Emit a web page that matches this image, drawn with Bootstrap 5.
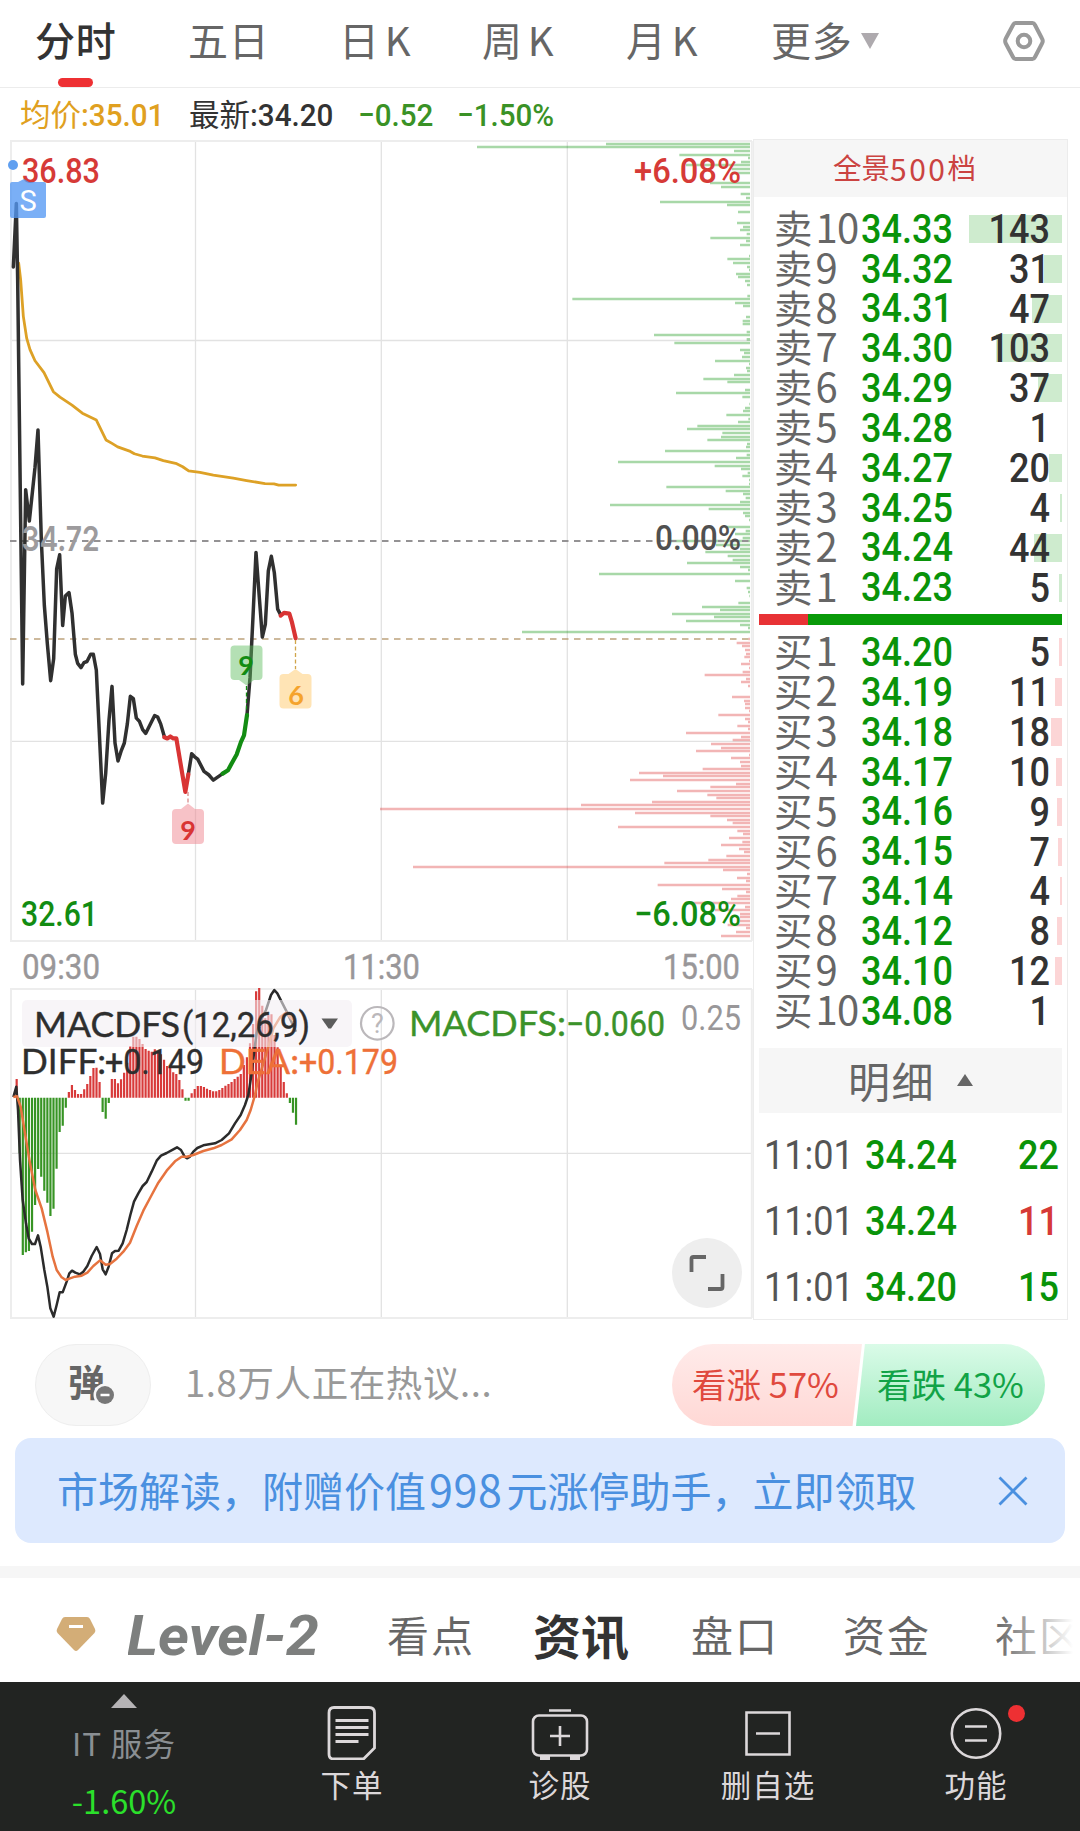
<!DOCTYPE html>
<html lang="zh-CN">
<head>
<meta charset="utf-8">
<meta name="viewport" content="width=device-width, initial-scale=1">
<title>分时</title>
<link href="https://cdn.jsdelivr.net/npm/bootstrap@5.3.0/dist/css/bootstrap.min.css" rel="stylesheet">
<style>
  body{width:1080px;height:1831px;overflow:hidden;background:#fff;color:#333;font-family:"Noto Sans CJK SC",sans-serif;line-height:1}
  svg{display:block;flex:none}
  svg text{white-space:pre}
  .num{display:inline-block;font-family:Roboto,"Noto Sans CJK SC",sans-serif;font-weight:500;transform:scaleX(.9);transform-origin:0 50%}
  .c-gold{color:#e0a020}.c-green{color:#3a9226}.c-deep{color:#099309}.c-red{color:#d63a37}.c-grey{color:#666}

  .period-bar{height:88px;border-bottom:1px solid #ececec;padding-left:35px;font-size:40px;color:#666}
  .period-bar .tab-item{flex:none;height:88px;line-height:78px;white-space:nowrap;letter-spacing:.8px}
  .period-bar .tab-item i{font-style:normal;margin-left:5px}
  .tab-item.on{color:#333;font-weight:500;position:relative}
  .tab-item.on::after{content:"";position:absolute;left:23px;bottom:1px;width:35px;height:9px;border-radius:5px;background:#ee3033}
  .w-a{width:153px}.w-b{width:151px}.w-c{width:143px}.w-d{width:144px}.w-e{width:145px}.w-f{width:232px}
  .caret-dn{display:inline-block;border:9.5px solid transparent;border-top:16px solid #aeaaae;border-bottom:0;margin-left:8px;vertical-align:7px}

  .quote-bar{height:52px;padding-left:20px;font-size:30.5px}
  .quote-bar .num{font-size:32px;transform:scaleX(.925)}
  .quote-bar>div{flex:none;white-space:nowrap;line-height:51px}
  .q1{width:169px}.q2{width:169px}.q3{width:99px}

  .board{height:1180px}
  .depth{width:315px;margin-top:-1px;height:1181px;border:1px solid #ececec}
  .depth-head{height:57px;background:#f6f6f6;color:#cb4341;font-size:28.5px;padding-right:12px;padding-bottom:2px}
  .depth-head span{font-size:30px;letter-spacing:2.5px}
  .levels{padding-top:12px}
  .level{height:39.85px;padding-right:5px;padding-left:20px}
  .level .lv{width:87px;font-size:38.5px;color:#666;white-space:nowrap;flex:none;margin-top:-6px}
  .level .lv span{font-size:40px;margin-left:3px;letter-spacing:-.8px}
  .level .num,.tick .num{font-size:40.5px;transform:scaleX(.89);flex:none}
  .level .qty{position:relative;flex:1 1 auto;height:28px;line-height:28px;text-align:right;padding-right:12px}
  .level .qty .num,.tick .qn{transform-origin:100% 50%;position:relative}
  .level .qty b{position:absolute;right:0;top:0;height:28px}
  .sell b{background:#ceebce}.buy b{background:#fcd5d6}
  .force{height:11px;margin:7px 5px 7px 5px;background:#099a09}
  .force span{width:49px;background:#e83235}
  .detail-head{height:65px;margin:17px 5px 0 5px;background:#f6f6f6;font-size:42px;color:#666;letter-spacing:1.4px}
  .caret-up{border:8px solid transparent;border-bottom:12px solid #666;border-top:0;margin-left:22px}
  .ticks{padding-top:9px}
  .tick{height:66px;padding:0 8px 0 10px}
  .tick .t{width:101px;color:#555;font-weight:400}

  .talk{height:82px;margin-top:24px;padding:0 35px}
  .danmu{width:116px;height:82px;border-radius:41px;background:#f7f7f7;border:1px solid #eee;padding-left:32px;padding-bottom:8px;font-size:37px;font-weight:700;color:#666;position:relative}
  .danmu svg{position:absolute;left:57px;top:38px}
  .hot{font-size:36.5px;color:#999;margin-left:34px;padding-bottom:5px;letter-spacing:.6px;white-space:nowrap}
  .vote{width:373px;height:82px;border-radius:41px;overflow:hidden;font-size:34.5px;white-space:nowrap}
  .vote>div{padding-bottom:3px}
  .vote-up{width:190px;color:#e0493e;background:linear-gradient(#ffebea,#ffd8d5);clip-path:polygon(0 0,100% 0,95% 100%,0 100%);padding-left:20px}
  .vote-dn{width:190px;margin-left:-6px;color:#12a347;background:linear-gradient(#dafbe8,#a2ecc1);clip-path:polygon(4.7% 0,100% 0,100% 100%,0 100%);padding-left:21px}
  .promo{height:105px;margin:12px 15px 0;border-radius:16px;background:#dde9fe;color:#4a90e0;font-size:41px;padding:0 37px 0 42px;white-space:nowrap}
  .promo div{padding-bottom:4px}
  .promo span{font-size:43px;margin:0 4px 0 3px;letter-spacing:.6px}
  .gap-bar{height:12px;margin-top:23px;background:#f6f6f6}
  .feed-tabs{height:104px;font-size:42px;color:#666;letter-spacing:2px;padding-left:56px;padding-top:7px;position:relative;overflow:hidden;white-space:nowrap}
  .feed-tabs>div{flex:none}
  .fade-end{position:absolute;right:0;top:0;width:85px;height:104px;background:linear-gradient(90deg,rgba(255,255,255,0),#fff 92%)}
  .feed-on{font-size:48px;font-weight:700;color:#333;letter-spacing:0;margin-left:-2px}
  .f1{width:259px;margin-left:32px}.f2{width:148px}.f3{width:158px}.f4{width:152px}.f5{width:152px}
  .dock{height:149px;background:#222422;color:#dcd8da;font-size:30.5px}
  .dock-item{width:208px;padding-top:22px;position:relative}
  .dock-item div{margin-top:8px;letter-spacing:1px;line-height:32px}
  .dock-index{width:248px;color:#8a8f93}
  .dock-index svg{margin-top:12px}
  .sector{margin-top:19px;font-size:31.5px;letter-spacing:1.2px}
  .sector-chg{margin-top:25px;font-size:32.5px;color:#2be02b}
  .dot-red{position:absolute;left:136px;top:23px;width:17px;height:17px;border-radius:50%;background:#ee3033}
</style>
<script src="https://cdn.jsdelivr.net/npm/bootstrap@5.3.0/dist/js/bootstrap.bundle.min.js"></script>
</head>
<body>

<nav class="period-bar d-flex">
  <div class="tab-item on w-a">分时</div>
  <div class="tab-item w-b">五日</div>
  <div class="tab-item w-c">日<i>K</i></div>
  <div class="tab-item w-d">周<i>K</i></div>
  <div class="tab-item w-e">月<i>K</i></div>
  <div class="tab-item w-f">更多<span class="caret-dn"></span></div>
  <svg width="42" height="80" viewBox="0 0 42 80" fill="none" stroke="#999" stroke-width="4"><path d="M12.5 23H29.5Q31 23 32 25L39 38.500Q40.500 41 39 43.500L32 57Q31 59 29.500 59H12.500Q11 59 10 57L2.800 43.500Q1.500 41 2.800 38.500L10 25Q11 23 12.500 23Z"/><circle cx="21" cy="41" r="6.300"/></svg>
</nav>

<section class="quote-bar d-flex">
  <div class="q1 c-gold">均价<span class="num">:35.01</span></div>
  <div class="q2">最新<span class="num">:34.20</span></div>
  <div class="q3 c-green"><span class="num">−0.52</span></div>
  <div class="c-green"><span class="num">−1.50%</span></div>
</section>

<main class="board d-flex">
  <svg id="chart" width="753" height="1180" viewBox="0 140 753 1180" font-family="Roboto,sans-serif" font-weight="500">
    <g fill="none" stroke="#e2e2e2" stroke-width="1.300">
      <path d="M195.500 141V941M381.300 141V941M567.300 141V941M11 340.500H752M11 741.400H752M195.500 989V1318M381.300 989V1318M567.300 989V1318M11 1153.400H752"/>
    </g>
    <g fill="none" stroke="#ededed" stroke-width="2">
      <path d="M752 941H11V141H752M752 989H11V1318H752"/><path d="M751.800 141V941M751.800 989V1318"/>
    </g>
    <path id="volUp" transform="translate(370 130) scale(.33333)" stroke="#008c00" stroke-opacity=".34" stroke-width="8" fill="none"/>
    <path id="volDn" transform="translate(370 540) scale(.33333)" stroke="#dc3c3c" stroke-opacity=".38" stroke-width="8" fill="none"/>
    <path d="M10 541H751" stroke="#949294" stroke-width="2" stroke-dasharray="6.500 5.500"/>
    <path d="M10 639H751" stroke="#bda27c" stroke-width="1.700" stroke-dasharray="6.500 5.500"/>

    <g fill="#d63a37" font-size="35.500">
      <text x="22" y="182.500" textLength="78" lengthAdjust="spacingAndGlyphs">36.83</text>
      <text x="634" y="182.500" textLength="107" lengthAdjust="spacingAndGlyphs">+6.08%</text>
    </g>
    <text x="655" y="550" font-size="35.500" fill="#505050" textLength="86" lengthAdjust="spacingAndGlyphs">0.00%</text>
    <g fill="#128c12" font-size="35.500">
      <text x="21" y="926" textLength="77" lengthAdjust="spacingAndGlyphs">32.61</text>
      <text x="634" y="926" textLength="107" lengthAdjust="spacingAndGlyphs">−6.08%</text>
    </g>
    <g fill="#999799" font-size="34.500" stroke="#999799" stroke-width=".4" font-weight="400">
      <text x="22" y="979" textLength="78" lengthAdjust="spacingAndGlyphs">09:30</text>
      <text x="343" y="979" textLength="77" lengthAdjust="spacingAndGlyphs">11:30</text>
      <text x="663" y="979" textLength="77" lengthAdjust="spacingAndGlyphs">15:00</text>
    </g>

    <g transform="translate(0 280) scale(.33333 .38265)" fill="none" stroke-linejoin="round" stroke-linecap="round">
      <g stroke="#dda126" stroke-width="2.800"><polyline vector-effect="non-scaling-stroke" points="56,-44 62,0 70,95 80,152 90,182 105,211 132,242 160,292 180,306 216,327 247,348 289,366 318,418 336,427 353,436 391,448 403,454 427,460 465,465 490,472 530,480 548,488 566,499 600,503 640,510 700,518 740,524 795,532 822,533 836,536 887,536"/></g>
      <g stroke="#303030" stroke-width="3.500">
        <polyline vector-effect="non-scaling-stroke" points="40,-34 49,-200 53,0 68,1056 77,548 88,630 105,490 114,392 124,680 133,850 142,950 152,1047 161,990 170,755 179,718 188,903 196,826 207,817 216,870 226,978 233,1002 243,1013 252,1000 261,997 272,978 280,978 289,1020 308,1367 317,1290 327,1150 336,1062 345,1210 354,1257 363,1232 373,1210 382,1160 391,1088 400,1094 409,1145 418,1153 428,1175 437,1185 464,1138 473,1142 482,1160 493,1193"/>
        <polyline vector-effect="non-scaling-stroke" points="565,1292 575,1238 584,1246 593,1252 612,1284 626,1293 640,1307 668,1290"/>
        <polyline vector-effect="non-scaling-stroke" points="741,1137 750,1040 759,880 768,712 778,830 787,933 796,900 805,760 814,722 823,765 833,860 842,875"/>
      </g>
      <g stroke="#d93434" stroke-width="4.200">
        <polyline vector-effect="non-scaling-stroke" points="493,1195 502,1198 511,1193 520,1198 529,1198 556,1338 565,1292"/>
        <polyline vector-effect="non-scaling-stroke" points="842,877 852,870 868,872 876,895 887,936"/>
      </g>
      <polyline vector-effect="non-scaling-stroke" stroke="#128c12" stroke-width="4.200" points="668,1290 684,1281 697,1260 710,1240 723,1207 732,1190 741,1137"/>
    </g>
    <text x="21.500" y="551" font-family="Inter,sans-serif" font-size="34.500" fill="#9d9b9d" font-weight="600" textLength="78" lengthAdjust="spacingAndGlyphs">34.72</text>

    <circle cx="13" cy="165" r="5" fill="#5f9ff0"/>
    <path d="M12 182H18L24 179L29 182H44Q46 182 46 184V216Q46 218 44 218H12Q10 218 10 216V184Q10 182 12 182Z" fill="#5598f3" fill-opacity=".78"/>
    <text x="28" y="211" font-size="29" font-weight="400" fill="#fff" text-anchor="middle">S</text>

    <g stroke-width="1.300" stroke-dasharray="4 2.500">
      <path d="M246.500 686V712" stroke="#128c12"/><path d="M188 792V804" stroke="#d98a8a"/><path d="M295.500 640V669" stroke="#d0a54b"/>
    </g>
    <path d="M234.500 645.500H258.500Q262.500 645.500 262.500 649.500V676Q262.500 680 258.500 680H254L246.500 685.500L239 680H234.500Q230.500 680 230.500 676V649.500Q230.500 645.500 234.500 645.500Z" fill="#5bbb5b" fill-opacity=".46"/>
    <path d="M176 809H181L188 803.500L195 809H200Q204 809 204 813V840Q204 844 200 844H176Q172 844 172 840V813Q172 809 176 809Z" fill="#ee8089" fill-opacity=".48"/>
    <path d="M283.500 674H288.500L295.500 669L302.500 674H307.500Q311.500 674 311.500 678V704.500Q311.500 708.500 307.500 708.500H283.500Q279.500 708.500 279.500 704.500V678Q279.500 674 283.500 674Z" fill="#ffe4b5"/>
    <g font-family="Lato,sans-serif" font-weight="700" font-size="27" text-anchor="middle">
      <text x="246" y="675" fill="#128c12">9</text><text x="188" y="840" fill="#d93434">9</text><text x="296" y="705" fill="#f5a32c">6</text>
    </g>

    <g transform="translate(0 960) scale(.33333)">
      <path id="macdUp" stroke="#d83a3a" stroke-width="6.600"/>
      <path id="macdDn" stroke="#379424" stroke-width="6.600"/>
      <g fill="none" stroke-width="7.500" stroke-linejoin="round">
        <polyline stroke="#2b2b2b" points="40,411 49,380 54,450 60,600 68,720 78,790 86,835 96,852 105,852 114,826 122,860 133,930 142,980 151,1045 161,1070 170,1035 179,997 188,997 200,965 208,940 216,932 226,938 240,943 250,935 262,918 275,888 290,861 300,882 308,928 317,943 326,920 336,880 345,873 356,872 368,850 380,810 391,765 402,725 415,700 428,678 440,666 455,635 470,602 483,587 500,579 520,568 531,562 543,570 554,590 561,595 570,590 580,575 592,564 610,556 645,550 665,540 687,520 705,490 722,465 735,435 745,405 755,340 764,262 770,220 780,185 798,150 813,105 823,90 832,100 860,155 888,215"/>
        <polyline stroke="#e6733f" points="40,411 51,409 62,440 75,520 90,610 106,690 125,745 142,815 158,890 170,930 185,952 197,960 210,955 225,950 245,947 262,938 280,918 300,901 317,914 330,912 350,896 370,875 390,848 410,798 430,752 455,705 475,668 500,632 525,604 545,590 560,590 580,585 610,573 640,565 665,555 695,538 720,510 740,480 752,450 765,405 772,370 790,310 805,260 820,205 840,172 858,158 878,180"/>
      </g>
    </g>
    <rect x="22" y="1000" width="330" height="47" rx="5" fill="#f3eef3" fill-opacity=".58"/>
    <g font-weight="400" font-size="35" fill="#2e2e2e" stroke="#2e2e2e" stroke-width=".4">
      <text x="34" y="1036.500" font-family="Lato,sans-serif" textLength="146" lengthAdjust="spacingAndGlyphs">MACDFS</text>
      <text x="182" y="1036.500" textLength="128" lengthAdjust="spacingAndGlyphs">(12,26,9)</text>
      <text x="21" y="1073.500" font-family="Lato,sans-serif" textLength="85" lengthAdjust="spacingAndGlyphs">DIFF:</text>
      <text x="105" y="1073.500" textLength="99" lengthAdjust="spacingAndGlyphs">+0.149</text>
    </g>
    <g font-weight="400" font-size="35" fill="#ee7038" stroke="#ee7038" stroke-width=".4">
      <text x="219" y="1073.500" font-family="Lato,sans-serif" textLength="80" lengthAdjust="spacingAndGlyphs">DEA:</text>
      <text x="299" y="1073.500" textLength="99" lengthAdjust="spacingAndGlyphs">+0.179</text>
    </g>
    <g font-weight="400" font-size="35" fill="#3b922a" stroke="#3b922a" stroke-width=".4">
      <text x="409" y="1036" font-family="Lato,sans-serif" textLength="157" lengthAdjust="spacingAndGlyphs">MACDFS:</text>
      <text x="566" y="1036" textLength="99" lengthAdjust="spacingAndGlyphs">−0.060</text>
    </g>
    <text x="681" y="1029.500" font-size="34.500" font-weight="400" fill="#999799" textLength="60" lengthAdjust="spacingAndGlyphs">0.25</text>
    <path d="M321.500 1018.500H338L331 1028.500H328.500Z" fill="#5c5c5c"/>
    <circle cx="377.300" cy="1023.300" r="16.300" fill="none" stroke="#bbb8bb" stroke-width="2.200"/>
    <text x="377.300" y="1033" font-size="27" font-weight="400" fill="#bbb8bb" text-anchor="middle">?</text>
    <circle cx="707" cy="1273" r="35" fill="#eee"/>
    <path d="M691.500 1272V1259Q691.500 1257 693.500 1257H706M722.500 1274V1287Q722.500 1289 720.500 1289H708" fill="none" stroke="#666" stroke-width="3.800"/>
  </svg>

  <aside class="depth">
    <div class="depth-head d-flex justify-content-center align-items-center">全景<span>500</span>档</div>
    <div class="sell levels" id="sell"></div>
    <div class="force d-flex"><span></span></div>
    <div class="buy" id="buy"></div>
    <div class="detail-head d-flex justify-content-center align-items-center">明细<div class="caret-up"></div></div>
    <div id="ticks" class="ticks"></div>
  </aside>
</main>

<section class="talk d-flex align-items-center">
  <div class="danmu d-flex align-items-center flex-shrink-0">弹
    <svg width="24" height="24" viewBox="0 0 24 24"><circle cx="12" cy="12" r="11.500" fill="#f7f7f7"/><circle cx="12" cy="12" r="9" fill="#777"/><path d="M7.500 12H16.500" stroke="#fff" stroke-width="2.500"/></svg>
  </div>
  <div class="hot flex-grow-1">1.8万人正在热议...</div>
  <div class="vote d-flex flex-shrink-0">
    <div class="vote-up d-flex align-items-center flex-shrink-0">看涨 57%</div>
    <div class="vote-dn d-flex align-items-center flex-shrink-0">看跌 43%</div>
  </div>
</section>

<section class="promo d-flex align-items-center justify-content-between">
  <div>市场解读，附赠价值<span>998</span>元涨停助手，立即领取</div>
  <svg width="30" height="30" viewBox="0 0 30 30" stroke="#4a90e0" stroke-width="2.800"><path d="M1.500 1.500L28.500 28.500M28.500 1.500L1.500 28.500"/></svg>
</section>

<div class="gap-bar"></div>

<nav class="feed-tabs d-flex align-items-center">
  <svg width="40" height="36" viewBox="0 0 40 36"><path d="M9 1H31Q33 1 34 3L39 13Q40 15 38.500 17L22 34Q20 36 18 34L1.500 17Q0 15 1 13L6 3Q7 1 9 1Z" fill="#d3ad77"/><path d="M13 10.500H27" stroke="#fff" stroke-width="3"/></svg>
  <div class="f1"><svg width="200" height="74" viewBox="0 0 200 74"><text x="-1" y="57.500" font-family="Roboto,sans-serif" font-size="56" font-weight="700" font-style="italic" fill="#7d7f7e" letter-spacing="0" textLength="192" lengthAdjust="spacingAndGlyphs">Level-2</text></svg></div>
  <div class="f2">看点</div>
  <div class="f3 feed-on">资讯</div>
  <div class="f4">盘口</div>
  <div class="f5">资金</div>
  <div>社区</div>
  <div class="fade-end"></div>
</nav>

<footer class="dock d-flex">
  <div class="dock-index d-flex flex-column align-items-center">
    <svg width="26" height="14" viewBox="0 0 26 14"><path d="M13 0L26 14H0Z" fill="#b5b3b5"/></svg>
    <div class="sector">IT 服务</div>
    <div class="sector-chg">-1.60%</div>
  </div>
  <div class="dock-item d-flex flex-column align-items-center">
    <svg width="56" height="56" viewBox="0 0 56 56" fill="none" stroke="#dcd8da" stroke-width="2.800"><path d="M10 3.500H45Q50.500 3.500 50.500 9V44L39.500 55H10Q5 55 5 50V9Q5 3.500 10 3.500Z"/><path d="M11.500 16.500H44.500M11.500 23.500H44.500M11.500 30.500H44.500M11.500 37.500H34.500"/></svg>
    <div>下单</div>
  </div>
  <div class="dock-item d-flex flex-column align-items-center">
    <svg width="58" height="56" viewBox="0 0 58 56" fill="none" stroke="#dcd8da" stroke-width="2.600"><rect x="2" y="11.500" width="54" height="40" rx="6"/><path d="M18 6.500H40M29 22V42M19 32H39"/><path d="M9 54H19M39 54H49" stroke-width="4"/></svg>
    <div>诊股</div>
  </div>
  <div class="dock-item d-flex flex-column align-items-center">
    <svg width="56" height="56" viewBox="0 0 56 56" fill="none" stroke="#dcd8da" stroke-width="2.600"><path d="M6.500 8.500H49.500V50.500H6.500ZM16 29.500H40"/></svg>
    <div>删自选</div>
  </div>
  <div class="dock-item d-flex flex-column align-items-center">
    <svg width="56" height="56" viewBox="0 0 56 56" fill="none" stroke="#dcd8da" stroke-width="2.600"><circle cx="28" cy="29.500" r="24.200"/><path d="M17 22.500H39M17 36.500H39"/></svg>
    <div>功能</div>
    <span class="dot-red"></span>
  </div>
</footer>

<script>
  // Price-level volume profile: pairs of row position and bar start, thirds of a pixel.
  const up=[42,708,51,321,63,1092,75,928,84,1134,96,1113,105,948,117,1085,129,1085,159,1020,171,1053,192,1112,204,1128,216,870,225,1071,246,1104,279,1101,291,1119,300,1110,312,1130,324,1021,333,1128,345,1110,378,1137,387,1072,399,1089,411,1131,420,1137,432,1098,441,1104,453,1125,465,1131,498,1132,507,607,519,1095,528,1119,561,1128,573,1118,582,1118,606,1130,615,852,628,1130,639,913,660,1110,669,1122,681,1116,693,1035,702,1137,714,1128,723,1131,735,1092,747,1000,756,1072,780,1125,789,918,801,1117,822,1138,834,1125,843,1119,855,1069,867,1135,876,1104,888,982,897,951,909,1057,921,1053,930,1012,942,1131,951,1128,963,885,975,1130,984,1098,996,744,1008,1034,1017,1113,1029,1133,1038,1117,1050,1137,1062,1137,1071,889,1083,1067,1092,1119,1104,1127,1116,1110,1125,720,1137,1016,1149,1119,1158,1125,1170,1137,1191,1065,1203,1127,1212,1095,1224,1118,1233,900,1245,1038,1257,1110,1266,1006,1278,1073,1290,1088,1299,951,1311,1110,1320,1134,1332,687,1353,1095,1374,1130,1386,1134,1398,1138,1419,1105,1431,996,1440,1050,1452,906,1461,1032,1473,948,1485,1110,1494,1134,1506,456];
  const dn=[297,1135,309,1100,318,1116,330,1125,342,1128,351,1123,363,1137,372,1113,384,1137,396,1118,405,1004,417,1128,426,1113,438,1134,471,1086,483,1122,492,1125,504,1125,513,1137,525,1045,537,1125,546,1134,558,1102,567,1134,579,948,591,1113,600,1088,612,1023,624,1053,633,978,645,1137,654,1083,666,1110,678,1113,687,998,699,807,708,879,720,780,732,1098,741,1021,753,921,765,1012,774,1039,786,846,795,633,807,30,819,795,828,1021,840,1071,849,1088,861,744,873,1102,882,1119,894,1077,906,1117,915,1053,927,1107,936,1122,948,1069,960,1015,969,883,981,129,990,1059,1002,1131,1014,1101,1023,1128,1035,863,1047,1056,1056,1128,1068,1102,1077,1083,1089,965,1101,1125,1110,1035,1122,1110,1131,1110,1143,1110,1155,1073,1164,1128,1176,1098,1188,1053];
  const bars=a=>{let s='';for(let i=0;i<a.length;i+=2)s+=`M1140 ${a[i]}H${a[i+1]}`;return s};
  volUp.setAttribute('d',bars(up));volDn.setAttribute('d',bars(dn));

  // MACD histogram, zero line at 413.
  const macd=[357,580,885,877,873,815,735,627,650,692,728,768,746,626,516,497,443,396,375,390,402,402,388,372,348,324,323,366,456,476,429,357,357,370,358,338,308,258,230,230,237,252,267,272,275,268,275,283,299,318,318,337,342,360,388,422,422,400,387,378,378,381,386,390,394,394,390,384,377,372,366,357,350,342,315,292,250,192,94,84,137,175,165,163,225,262,320,366,400,429,458,494];
  let r='',g='';
  macd.forEach((v,k)=>{const p=`M${(50+9.21*k).toFixed(1)} 413V${v}`;v<413?r+=p:g+=p});
  macdUp.setAttribute('d',r);macdDn.setAttribute('d',g);

  const row=(c,[n,p,q,w])=>`<div class="level d-flex align-items-center"><div class="lv">${c}<span>${n}</span></div><span class="num c-deep">${p}</span><div class="qty"><b style="width:${w}px"></b><span class="num">${q}</span></div></div>`;
  sell.innerHTML=[[10,'34.33',143,93],[9,'34.32',31,18],[8,'34.31',47,30],[7,'34.30',103,66],[6,'34.29',37,24],[5,'34.28',1,0],[4,'34.27',20,13],[3,'34.25',4,2],[2,'34.24',44,28],[1,'34.23',5,3]].map(x=>row('卖',x)).join('');
  buy.innerHTML=[[1,'34.20',5,3],[2,'34.19',11,7],[3,'34.18',18,11],[4,'34.17',10,6],[5,'34.16',9,5],[6,'34.15',7,4],[7,'34.14',4,2],[8,'34.12',8,5],[9,'34.10',12,7],[10,'34.08',1,0]].map(x=>row('买',x)).join('');
  ticks.innerHTML=[['34.24',22,'c-deep'],['34.24',11,'c-red'],['34.20',15,'c-deep']].map(([p,q,c])=>`<div class="tick d-flex align-items-center"><span class="num t">11:01</span><span class="num c-deep">${p}</span><span class="num qn ms-auto ${c}">${q}</span></div>`).join('');
</script>
</body>
</html>
